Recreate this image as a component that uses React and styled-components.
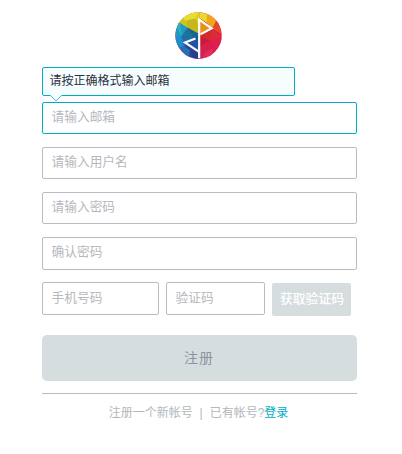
import React from "react";
import styled, { createGlobalStyle } from "styled-components";

const GlobalStyle = createGlobalStyle`
  *, *::before, *::after { box-sizing: border-box; }
  body {
    margin: 0;
    background: #fff;
    font-family: "Liberation Sans", "Noto Sans CJK SC", sans-serif;
  }
`;

const Page = styled.main`
  width: 402px;
  height: 454px;
  padding: 12px 45px 0 42px;
  overflow: hidden;
`;

const LogoBar = styled.header`
  display: flex;
  justify-content: center;
  height: 55px;
  padding-right: 2px;
`;

const Logo = styled.svg`
  display: block;
  width: 47px;
  height: 47px;
`;

const Form = styled.form`
  display: flex;
  flex-direction: column;
`;

const Hint = styled.div`
  position: relative;
  width: 253px;
  height: 29px;
  margin-bottom: 6px;
  padding-left: 6.5px;
  border: 1px solid #00adc6;
  border-radius: 2px;
  background: #f5fdff;
  color: #2b303a;
  font-size: 12px;
  line-height: 26px;
`;

const HintArrow = styled.svg`
  position: absolute;
  left: 7px;
  top: 27px;
  width: 12px;
  height: 7px;
`;

const Field = styled.input`
  display: block;
  width: ${(p) => p.$width || 315}px;
  height: ${(p) => p.$height || 32}px;
  margin: 0 0 ${(p) => p.$gap || 0}px;
  padding: 0 8px ${(p) => p.$lift || 2}px 8.6px;
  border: 1px solid ${(p) => (p.$active ? "#00adc6" : "#b9bbc5")};
  border-radius: 2px;
  outline: none;
  background: #fff;
  font-family: inherit;
  font-size: 12.7px;

  &::placeholder {
    color: #b5b9bd;
    opacity: 1;
  }
`;

const CodeRow = styled.div`
  display: flex;
  gap: 7px;
  height: 53px;
`;

const CodeButton = styled.button`
  width: 79px;
  height: 33px;
  margin-top: 1px;
  padding: 0 0 4px 1px;
  border: 0;
  border-radius: 2px;
  background: #d5dddf;
  color: #fff;
  font-family: inherit;
  font-size: 12.8px;
  font-weight: 500;
  white-space: nowrap;
`;

const Submit = styled.button`
  width: 315px;
  height: 46px;
  padding: 0 0 2px 0;
  border: 0;
  border-radius: 5px;
  background: #d5dddf;
  color: #8e939b;
  font-family: inherit;
  font-size: 14px;
  letter-spacing: 1px;
  text-indent: -1px;
`;

const Footer = styled.footer`
  display: flex;
  justify-content: center;
  margin-top: 12px;
  padding: 10px 2px 0 0;
  border-top: 1px solid #b9bbc0;
  color: #b3b7bb;
  font-size: 12px;
  line-height: 18px;
  white-space: nowrap;
`;

const Divider = styled.span`
  width: 17px;
  text-align: center;
`;

const Login = styled.a`
  color: #00adc6;
`;

function BrandLogo() {
  return (
    <Logo viewBox="0 0 140 140">
      <defs>
        <clipPath id="disc"><circle cx="70" cy="70" r="69" /></clipPath>
      </defs>
      <g clipPath="url(#disc)">
        <path d="M0 0H140V140H0Z" fill="#d91e49" />
        <path d="M0 40L35 0 72 0V70L38 47Z" fill="#cfc41f" />
        <path d="M15 0H72L60 19 30 26Z" fill="#e6de35" />
        <path d="M60 19L72 0V42Z" fill="#dccf27" />
        <path d="M34 26L60 19 72 42V65L38 47Z" fill="#c5b71d" />
        <path d="M72 0L107 8 98 34 72 18Z" fill="#ecd829" />
        <path d="M72 18L111 49 72 72Z" fill="#e8901c" />
        <path d="M96 0L130 25 111 49 94 32Z" fill="#f0a51d" />
        <path d="M111 49L125 20 145 70Z" fill="#e6452f" />
        <path d="M72 72L111 49 104 85Z" fill="#d32a2d" />
        <path d="M111 49L140 75 104 85Z" fill="#dc2b39" />
        <path d="M72 72L104 85 72 105Z" fill="#c61b3b" />
        <path d="M104 85L140 75V115L115 108Z" fill="#dc2050" />
        <path d="M72 105L104 85 115 108 90 121Z" fill="#d91f4b" />
        <path d="M72 105L90 121 80 140H72Z" fill="#cc2358" />
        <path d="M90 121L115 108 105 140H80Z" fill="#e22d5a" />
        <path d="M0 35L15 33 38 47 20 72 0 78Z" fill="#1b9cc4" />
        <path d="M0 35L15 33 20 72Z" fill="#36aec6" />
        <path d="M38 47L55 75 20 72Z" fill="#12789f" />
        <path d="M38 47L72 65V80L55 75Z" fill="#0f6994" />
        <path d="M0 78L20 72 27 101 12 110Z" fill="#1c8fce" />
        <path d="M20 72L55 75 27 101Z" fill="#1770b0" />
        <path d="M55 75L72 70V120L27 101Z" fill="#1e54a3" />
        <path d="M12 105L27 101 45 115 40 140Z" fill="#2371b8" />
        <path d="M27 101L72 110V140H40L45 115Z" fill="#26489a" />
        <path d="M45 115L72 120V140H55Z" fill="#293c8e" />
      </g>
      <path d="M77 66L109 49 72 23V138M61 79L30 91 72 119" fill="none" stroke="#fff" strokeWidth="6.5" />
    </Logo>
  );
}

export default function App() {
  return (
    <>
      <GlobalStyle />
      <Page>
        <LogoBar><BrandLogo /></LogoBar>
        <Form>
          <Hint>
            请按正确格式输入邮箱
            <HintArrow viewBox="0 0 12 7">
              <path d="M0 0H12L6 6Z" fill="#f5fdff" />
              <path d="M0.5 0.5L6 6 11.5 0.5" fill="none" stroke="#35bfd2" />
            </HintArrow>
          </Hint>
          <Field $active $gap={13} placeholder="请输入邮箱" />
          <Field $gap={13} placeholder="请输入用户名" />
          <Field $gap={13} type="password" placeholder="请输入密码" />
          <Field $gap={12} $height={33} $lift={3} type="password" placeholder="确认密码" />
          <CodeRow>
            <Field $width={117} $height={33} placeholder="手机号码" />
            <Field $width={99} $height={33} placeholder="验证码" />
            <CodeButton type="button">获取验证码</CodeButton>
          </CodeRow>
          <Submit type="button">注册</Submit>
        </Form>
        <Footer>
          <span>注册一个新帐号</span>
          <Divider>|</Divider>
          <span>已有帐号?</span>
          <Login>登录</Login>
        </Footer>
      </Page>
    </>
  );
}
